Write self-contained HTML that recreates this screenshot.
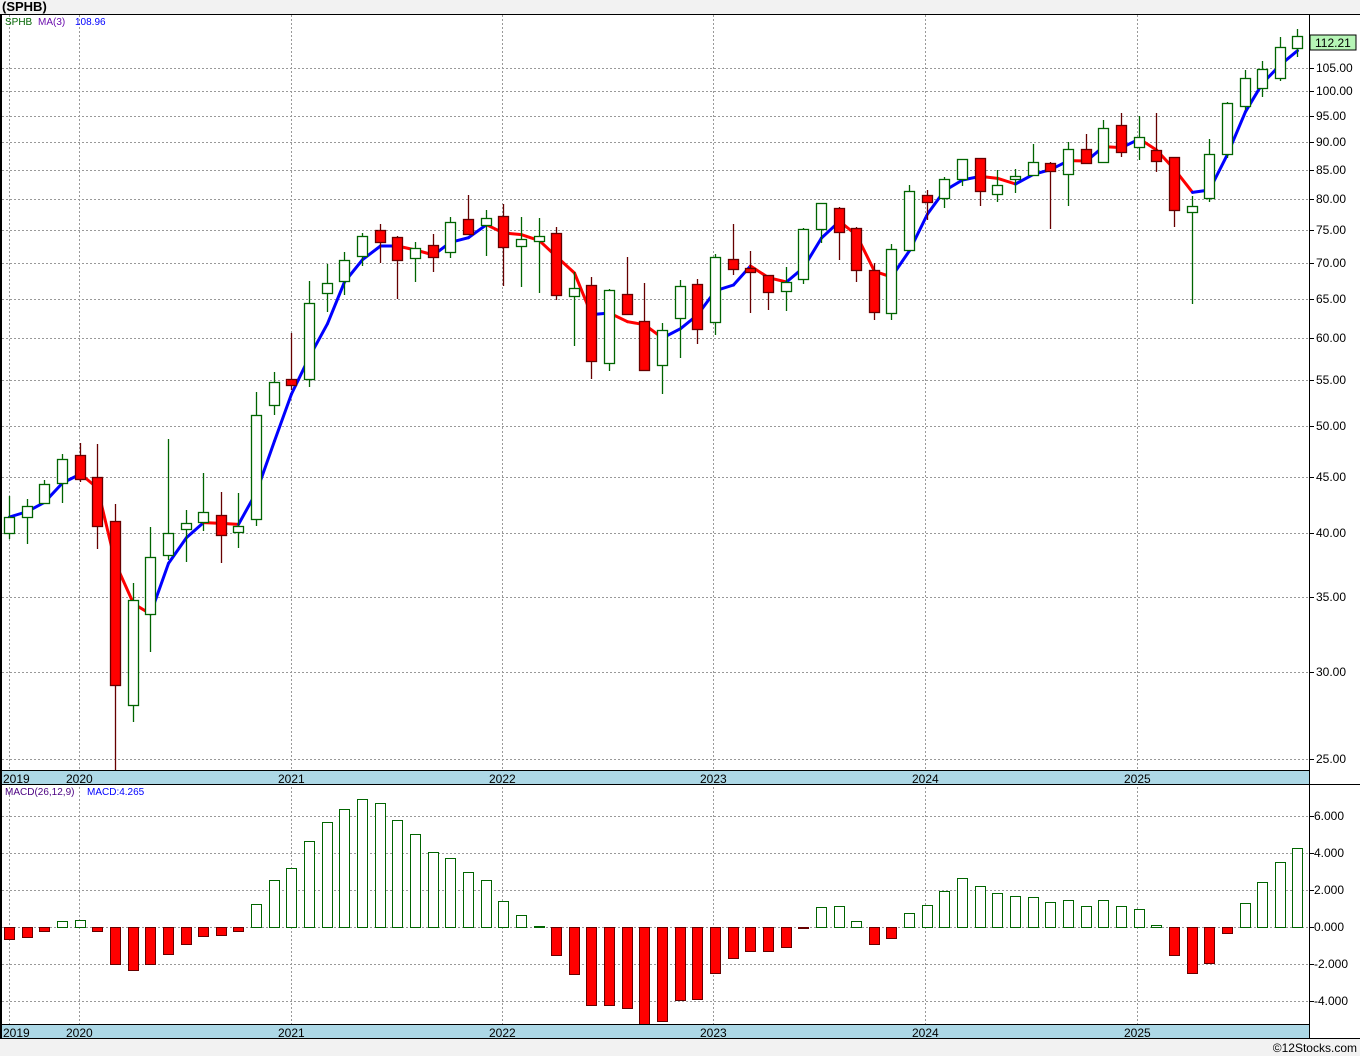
<!DOCTYPE html>
<html><head><meta charset="utf-8"><style>
html,body{margin:0;padding:0;background:#f2f2f2;}
svg{display:block;font-family:"Liberation Sans",Tahoma,sans-serif;}
</style></head><body>
<svg id="s" width="1360" height="1056" xmlns="http://www.w3.org/2000/svg">
<rect x="0" y="0" width="1360" height="1056" fill="#f2f2f2"/>
<rect x="0" y="14" width="1309" height="1024" fill="#fff"/>
<rect x="1309" y="14" width="51" height="1024" fill="#fff"/>
<text x="2" y="11" font-size="13" font-weight="bold" fill="#000">(SPHB)</text>
<g id="grid"></g>
<g id="macd"></g>
<g id="ma"></g>
<g id="candles"></g>
<rect x="0" y="770" width="1309" height="14" fill="#add8e6"/>
<rect x="0" y="1024" width="1309" height="14" fill="#add8e6"/>
<line x1="0" y1="14.5" x2="1360" y2="14.5" stroke="#000"/>
<line x1="0" y1="770.5" x2="1309" y2="770.5" stroke="#000"/>
<line x1="0" y1="784.5" x2="1360" y2="784.5" stroke="#000"/>
<line x1="0" y1="1024.5" x2="1309" y2="1024.5" stroke="#000"/>
<line x1="0" y1="1038.5" x2="1360" y2="1038.5" stroke="#000"/>
<line x1="1309.5" y1="14" x2="1309.5" y2="1038" stroke="#000"/>
<rect x="0" y="14" width="2" height="1024" fill="#000"/>
<g id="labels" font-size="12" fill="#000"></g>
<text x="5" y="25" font-size="10" fill="#006400">SPHB</text>
<text x="38" y="25" font-size="10" fill="#6a0dad">MA(3)</text>
<text x="75" y="25" font-size="10" fill="#0000ff">108.96</text>
<text x="5" y="795" font-size="10" fill="#4b0082">MACD(26,12,9)</text>
<text x="87" y="795" font-size="10" fill="#0000ff">MACD:4.265</text>
<rect x="1310" y="35" width="46" height="15" fill="#b6f5b6" stroke="#000"/>
<text x="1315" y="47" font-size="12" fill="#000">112.21</text>
<text x="1357" y="1052" font-size="12" fill="#000" text-anchor="end">©12Stocks.com</text>
</svg>
<script>
var NS="http://www.w3.org/2000/svg";
function el(p,t,a){var e=document.createElementNS(NS,t);for(var k in a)e.setAttribute(k,a[k]);p.appendChild(e);return e;}
var g=document.getElementById('grid'),lab=document.getElementById('labels');
var px=[[105,68],[100,91],[95,116],[90,142],[85,170],[80,199],[75,230],[70,263],[65,299],[60,338],[55,380],[50,426],[45,477],[40,533],[35,597],[30,672],[25,759]];
px.forEach(function(p){el(g,'line',{x1:2,x2:1309,y1:p[1]+.5,y2:p[1]+.5,stroke:'#999','stroke-dasharray':'2,2'});
el(lab,'line',{x1:1309,x2:1314,y1:p[1]+.5,y2:p[1]+.5,stroke:'#000'});
var t=el(lab,'text',{x:1316,y:p[1]+4});t.textContent=p[0].toFixed(2);});
var mp=[[6,816],[4,853],[2,890],[0,927],[-2,964],[-4,1001]];
mp.forEach(function(p){el(g,'line',{x1:2,x2:1309,y1:p[1]+.5,y2:p[1]+.5,stroke:'#999','stroke-dasharray':'2,2'});
el(lab,'line',{x1:1309,x2:1314,y1:p[1]+.5,y2:p[1]+.5,stroke:'#000'});
var t=el(lab,'text',{x:1314,y:p[1]+4});t.textContent=p[0].toFixed(3);});
var yrs=[[9,'2019'],[79,'2020'],[291,'2021'],[502,'2022'],[713,'2023'],[925,'2024'],[1137,'2025']];
yrs.forEach(function(p){el(g,'line',{x1:p[0]+.5,x2:p[0]+.5,y1:15,y2:1024,stroke:'#999','stroke-dasharray':'2,2'});
[783,1037].forEach(function(y){var t=el(lab,'text',{x:p[0]==9?3:p[0]-13,y:y});t.textContent=p[1];});});
// candles: [top,bottom,high,low,red]
var C=[[517,533,496,539,0],[506,517,499,544,0],[484,503,480,503,0],[459,483,454,503,0],[455,479,443,482,1],[477,526,444,549,1],[521,685,504,770,1],[600,705,583,722,0],[557,614,527,652,0],[533,555,439,560,0],[523,529,510,562,0],[512,522,473,531,0],[515,535,492,563,1],[526,532,493,548,0],[415,519,392,526,0],[382,405,372,415,0],[379,385,333,390,1],[303,379,281,387,0],[283,293,264,312,0],[260,281,252,295,0],[236,256,233,266,0],[230,242,224,263,1],[237,260,236,299,1],[248,258,242,282,0],[245,257,234,272,1],[222,252,217,258,0],[219,234,195,234,1],[218,225,210,256,0],[216,247,204,286,1],[239,246,217,287,0],[236,241,218,293,0],[233,295,227,300,1],[288,296,272,346,0],[285,361,277,379,1],[290,363,289,371,0],[294,314,257,315,1],[321,370,283,370,1],[330,365,323,394,0],[286,318,280,358,0],[284,329,279,344,1],[257,322,254,335,0],[259,269,224,275,1],[268,272,251,313,1],[275,292,275,310,1],[282,291,267,311,0],[229,279,228,284,0],[203,229,203,243,0],[208,232,207,260,1],[228,270,227,282,1],[270,312,263,320,1],[249,313,244,320,0],[191,250,185,250,0],[195,202,190,220,1],[179,198,177,208,0],[159,179,159,186,0],[158,191,158,206,1],[185,194,170,202,0],[176,179,169,193,0],[162,175,144,175,0],[163,171,162,229,1],[149,174,142,206,0],[149,163,134,163,1],[128,162,120,162,0],[125,152,113,157,1],[137,147,116,160,0],[150,161,113,172,1],[157,210,157,227,1],[206,212,196,304,0],[154,198,139,202,0],[103,154,102,158,0],[78,106,70,110,0],[69,88,61,97,0],[47,78,37,81,0],[36,48,29,57,0]];
var M=[939,937,931,921,920,931,964,970,964,954,944,936,935,931,904,880,868,841,822,809,799,803,820,834,852,858,872,880,901,915,926,955,974,1005,1005,1008,1024,1021,1000,999,973,958,951,951,947,928,907,906,921,944,938,913,905,891,878,886,893,896,897,902,900,906,900,906,909,925,955,973,963,933,903,882,862,848];
var cg=document.getElementById('candles'),mg=document.getElementById('macd'),ag=document.getElementById('ma');
function X(i){return Math.round(9+i*17.65);}
var closes=[];
C.forEach(function(c,i){var x=X(i);var col=c[4]?'#600':'#006400';
el(cg,'line',{x1:x+.5,x2:x+.5,y1:c[2],y2:c[3],stroke:c[4]?'#600':'#006400','stroke-width':1.3});
el(cg,'rect',{x:x-4.5,y:c[0]+.5,width:10,height:Math.max(c[1]-c[0],1),fill:c[4]?'#f00':'#fff',stroke:c[4]?'#600':'#006400','stroke-width':1.3});
closes.push(c[4]?c[1]:c[0]);});
var ma=[];for(var i=0;i<C.length;i++){var a=closes.slice(Math.max(0,i-2),i+1);ma.push(a.reduce(function(s,v){return s+v},0)/a.length);}
for(var i=1;i<ma.length;i++){el(ag,'line',{x1:X(i-1)+.5,y1:ma[i-1],x2:X(i)+.5,y2:ma[i],stroke:ma[i]<=ma[i-1]?'#00f':'#f00','stroke-width':3,'stroke-linecap':'round'});}
M.forEach(function(v,i){var x=X(i);if(v<927){el(mg,'rect',{x:x-4.5,y:v+.5,width:10,height:927-v,fill:'#fff',stroke:'#006400'});}
else{el(mg,'rect',{x:x-4.5,y:927.5,width:10,height:Math.max(v-927,1),fill:'#f00',stroke:'#600'});}});
</script>
</body></html>
